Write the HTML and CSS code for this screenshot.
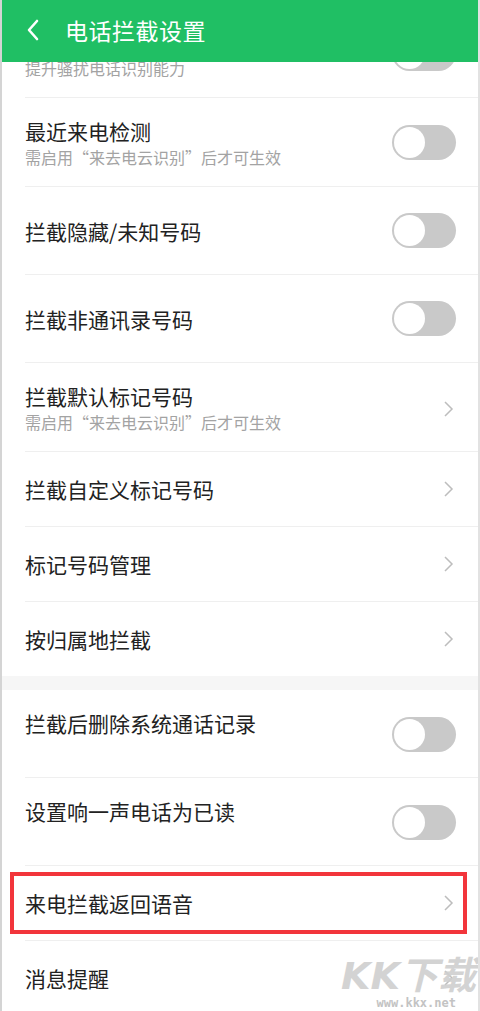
FILE: index.html
```html
<!DOCTYPE html>
<html lang="zh-CN">
<head>
  <meta charset="UTF-8" />
  <meta name="viewport" content="width=device-width, initial-scale=1.0"/>
  <title>电话拦截设置</title>
  <link rel="stylesheet" href="styles.css">
</head>
<body>

<div class="page">
  <header class="topbar">
    <svg class="back" width="14" height="22" viewBox="0 0 14 22">
      <path d="M11 2 L3 11 L11 20" fill="none" stroke="#fff" stroke-width="2.6" stroke-linecap="round" stroke-linejoin="round"/>
    </svg>
    <h1>电话拦截设置</h1>
  </header>

  <div class="list first">
    <!-- scrolled half under the bar -->
    <div class="row two">
      <div class="text">
        <div class="title blank"></div>
        <div class="sub">提升骚扰电话识别能力</div>
      </div>
      <span class="toggle"><span class="knob"></span></span>
    </div>

    <div class="row two">
      <div class="text">
        <div class="title">最近来电检测</div>
        <div class="sub">需启用“来去电云识别”后才可生效</div>
      </div>
      <span class="toggle"><span class="knob"></span></span>
    </div>

    <div class="row tall">
      <div class="title">拦截隐藏/未知号码</div>
      <span class="toggle"><span class="knob"></span></span>
    </div>

    <div class="row tall">
      <div class="title">拦截非通讯录号码</div>
      <span class="toggle"><span class="knob"></span></span>
    </div>

    <div class="row two">
      <div class="text">
        <div class="title">拦截默认标记号码</div>
        <div class="sub">需启用“来去电云识别”后才可生效</div>
      </div>
      <svg class="arrow" width="12" height="16" viewBox="0 0 12 16"><path d="M3 1 L10 8 L3 15" fill="none" stroke="#bdbdbd" stroke-width="1.5"/></svg>
    </div>

    <div class="row">
      <div class="title">拦截自定义标记号码</div>
      <svg class="arrow" width="12" height="16" viewBox="0 0 12 16"><path d="M3 1 L10 8 L3 15" fill="none" stroke="#bdbdbd" stroke-width="1.5"/></svg>
    </div>

    <div class="row">
      <div class="title">标记号码管理</div>
      <svg class="arrow" width="12" height="16" viewBox="0 0 12 16"><path d="M3 1 L10 8 L3 15" fill="none" stroke="#bdbdbd" stroke-width="1.5"/></svg>
    </div>

    <div class="row last">
      <div class="title">按归属地拦截</div>
      <svg class="arrow" width="12" height="16" viewBox="0 0 12 16"><path d="M3 1 L10 8 L3 15" fill="none" stroke="#bdbdbd" stroke-width="1.5"/></svg>
    </div>
  </div>

  <div class="gap"></div>

  <div class="list">
    <div class="row two">
      <div class="text">
        <div class="title">拦截后删除系统通话记录</div>
        <div class="sub empty"></div>
      </div>
      <span class="toggle"><span class="knob"></span></span>
    </div>

    <div class="row two">
      <div class="text">
        <div class="title">设置响一声电话为已读</div>
        <div class="sub empty"></div>
      </div>
      <span class="toggle"><span class="knob"></span></span>
    </div>

    <div class="row marked">
      <div class="title">来电拦截返回语音</div>
      <svg class="arrow" width="12" height="16" viewBox="0 0 12 16"><path d="M3 1 L10 8 L3 15" fill="none" stroke="#bdbdbd" stroke-width="1.5"/></svg>
      <span class="redbox"></span>
    </div>

    <div class="row">
      <div class="title">消息提醒</div>
      <svg class="arrow" width="12" height="16" viewBox="0 0 12 16"><path d="M3 1 L10 8 L3 15" fill="none" stroke="#bdbdbd" stroke-width="1.5"/></svg>
    </div>
  </div>

  <div class="watermark">
    <div class="wm-big">KK下载</div>
    <div class="wm-url">www.kkx.net</div>
  </div>
</div>

</body>
</html>
```

FILE: styles.css
```css
html, body {
  margin: 0;
  padding: 0;
  background: #fff;
}

body {
  font-family: "Noto Sans CJK SC", "Noto Sans", sans-serif;
  color: #262626;
  overflow: hidden;
}

.page {
  position: relative;
  width: 480px;
  height: 1011px;
  overflow: hidden;
  box-sizing: border-box;
  border-left: 2px solid #d4d4d4;
  border-right: 2px solid #e2e2e2;
}

.topbar {
  position: relative;
  z-index: 2;
  height: 62px;
  box-sizing: border-box;
  margin: 0 -2px;
  background: #20bf64;
  display: flex;
  align-items: center;
  padding-left: 26px;
  padding-bottom: 2px;
}

.back {
  display: block;
}

.topbar h1 {
  margin: 0 0 0 25px;
  font-size: 23px;
  font-weight: 400;
  line-height: 30px;
  color: #fff;
  letter-spacing: 0.5px;
}

.list.first {
  margin-top: -53px;
}

.row {
  position: relative;
  display: flex;
  align-items: center;
  justify-content: space-between;
  margin-left: 23px;
  padding-right: 22px;
  min-height: 74px;
  border-bottom: 1px solid #efefef;
}

.row.tall {
  min-height: 87px;
}

.row.last {
  border-bottom: none;
}

.row.two {
  align-items: flex-start;
  padding-top: 19px;
  padding-bottom: 17px;
  min-height: 0;
}

.row.two .toggle {
  margin-top: 8px;
}

.row.two .arrow {
  margin-top: 19px;
}

.title {
  font-size: 21px;
  line-height: 28px;
  color: #222;
}

.title.blank {
  height: 28px;
}

.sub {
  font-size: 16px;
  line-height: 24px;
  color: #a3a3a3;
}

.sub.empty {
  height: 23px;
}

.toggle {
  flex: none;
  width: 64px;
  height: 35px;
  box-sizing: border-box;
  padding: 2px;
  border-radius: 18px;
  background: #c9c9c9;
}

.knob {
  display: block;
  width: 31px;
  height: 31px;
  border-radius: 50%;
  background: #fff;
}

.arrow {
  flex: none;
  display: block;
  margin-right: 2px;
}

.gap {
  height: 14px;
  background: #f6f6f6;
}

.redbox {
  position: absolute;
  top: 6px;
  bottom: 6px;
  left: -15px;
  right: 11px;
  border: 4px solid #f2353b;
  pointer-events: none;
}

.watermark {
  position: absolute;
  right: 2px;
  bottom: 1px;
  text-align: right;
  color: #c4c4c4;
  opacity: 0.9;
}

.wm-big {
  font-family: "DejaVu Sans", "Noto Sans CJK SC", sans-serif;
  font-size: 38px;
  font-weight: 700;
  font-style: italic;
  line-height: 40px;
  color: #cfcfcf;
}

.wm-url {
  font-family: "DejaVu Sans Mono", monospace;
  font-size: 12px;
  font-weight: 700;
  line-height: 14px;
  padding-right: 20px;
  color: #bdbdbd;
}
```
